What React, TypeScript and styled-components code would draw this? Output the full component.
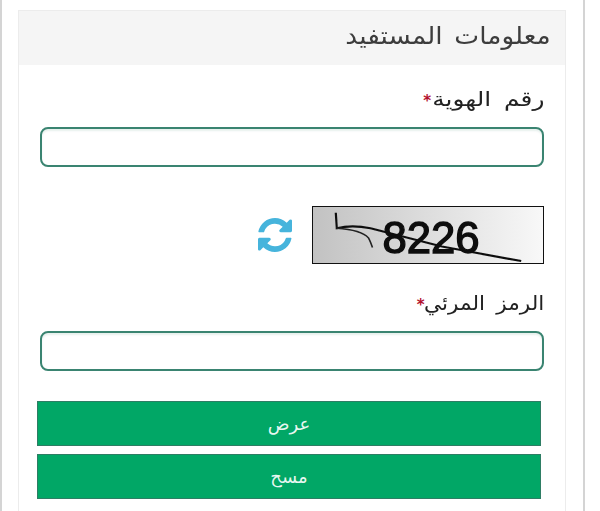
import styled, { createGlobalStyle } from "styled-components";

const GlobalStyle = createGlobalStyle`
  html, body {
    margin: 0;
    background: #fff;
    overflow: hidden;
  }
`;

function Captcha() {
  return (
    <CaptchaFrame viewBox="0 0 232 58" preserveAspectRatio="none" aria-label="captcha">
      <defs>
        <linearGradient id="captchaBg" x1="0" x2="1" y1="0" y2="0">
          <stop offset="0" stopColor="#c2c2c2" />
          <stop offset="0.55" stopColor="#e0e0e0" />
          <stop offset="1" stopColor="#f8f8f8" />
        </linearGradient>
        <filter id="captchaBlur">
          <feGaussianBlur stdDeviation="0.7" />
        </filter>
      </defs>
      <rect width="232" height="58" fill="url(#captchaBg)" />
      <g filter="url(#captchaBlur)">
        <text
          x="70"
          y="48"
          fontFamily="'Liberation Sans', sans-serif"
          fontSize="46"
          fill="#111"
          stroke="#111"
          strokeWidth="1.4"
          textLength="98"
          lengthAdjust="spacingAndGlyphs"
        >
          8226
        </text>
        <path d="M23 6 L24 22 C36 19 48 20 58 22 L130 41 L210 56" stroke="#111" strokeWidth="2.2" fill="none" />
        <path d="M24 22 C38 23 50 25 56 32 C58 36 59 39 60 42" stroke="#222" strokeWidth="1.6" fill="none" />
      </g>
    </CaptchaFrame>
  );
}

function RefreshGlyph() {
  return (
    <RefreshSvg viewBox="128 128 1536 1536" aria-hidden="true">
      <path
        fill="currentColor"
        d="M1639 1056q0 5-1 7-64 268-268 434.5t-478 166.5q-146 0-282.5-55t-243.500-157l-129 129q-19 19-45 19t-45-19-19-45v-448q0-26 19-45t45-19h448q26 0 45 19t19 45-19 45l-137 137q71 66 161 102t187 36q134 0 250-65t186-179q11-17 53-117 8-23 30-23h192q13 0 22.500 9.500t9.500 22.500zm25-800v448q0 26-19 45t-45 19h-448q-26 0-45-19t-19-45 19-45l138-138q-148-137-349-137-134 0-250 65t-186 179q-11 17-53 117-8 23-30 23h-199q-13 0-22.500-9.500t-9.500-22.500v-7q65-268 270-434.500t480-166.500q146 0 284 55.500t245 156.500l130-129q19-19 45-19t45 19 19 45z"
      />
    </RefreshSvg>
  );
}

function App() {
  return (
    <Page dir="rtl">
      <GlobalStyle />
      <Panel>
        <PanelHeading>
          <Stretched $x={1.1}>معلومات المستفيد</Stretched>
        </PanelHeading>
        <PanelBody>
          <Field>
            <Label>
              <Stretched $x={1.24}>رقم الهوية</Stretched>
              <Required>*</Required>
            </Label>
            <TextInput type="text" />
          </Field>
          <CaptchaRow>
            <Captcha />
            <RefreshGlyph />
          </CaptchaRow>
          <Field>
            <Label>
              <Stretched $x={1.08}>الرمز المرئي</Stretched>
              <Required>*</Required>
            </Label>
            <TextInput type="text" />
          </Field>
          <Actions>
            <ActionButton type="button">عرض</ActionButton>
            <ActionButton type="button">مسح</ActionButton>
          </Actions>
        </PanelBody>
      </Panel>
    </Page>
  );
}

const Page = styled.div`
  box-sizing: border-box;
  width: 585px;
  height: 511px;
  padding: 10px 17px 0 16px;
  border-left: 2px solid #d4d4d4;
  border-right: 2px solid #d4d4d4;
  font-family: "DejaVu Sans", "Noto Sans", sans-serif;
  overflow: hidden;
`;

const Panel = styled.section`
  height: 520px;
  border: 1px solid #ececec;
  background: #fff;
`;

const PanelHeading = styled.h3`
  box-sizing: border-box;
  height: 54px;
  margin: 0;
  padding: 0 14px 0 0;
  background: #f5f5f5;
  color: #3d3d3d;
  font-size: 24px;
  font-weight: 400;
  line-height: 50px;
  word-spacing: 3px;
`;

// the Arabic face in the reference runs wider than DejaVu, letter-spacing has no effect on joined script
const Stretched = styled.span<{ $x: number }>`
  display: inline-block;
  transform: scaleX(${({ $x }) => $x});
  transform-origin: right center;
  margin-left: ${({ $x }) => `${($x - 1) * 90}px`};
`;

const PanelBody = styled.div`
  display: flex;
  flex-direction: column;
  padding: 19px 21px 0 21px;
`;

const Field = styled.div`
  display: flex;
  flex-direction: column;
`;

const Label = styled.label`
  color: #222;
  font-size: 20px;
  line-height: 30px;
  margin-bottom: 11px;
  word-spacing: 4px;
`;

const Required = styled.span`
  color: #b3112e;
  font-size: 15px;
  font-weight: 700;
  margin-right: 1px;
`;

const TextInput = styled.input`
  box-sizing: border-box;
  width: 504px;
  height: 40px;
  padding: 0 10px;
  border: 2px solid #3a8471;
  border-radius: 8px;
  background: #fff;
  box-shadow: inset 0 2px 2px rgba(20, 110, 80, 0.1);
  outline: none;
`;

const CaptchaRow = styled.div`
  display: flex;
  align-items: center;
  gap: 20px;
  margin: 39px 0 24px;
`;

const CaptchaFrame = styled.svg`
  display: block;
  box-sizing: border-box;
  width: 232px;
  height: 58px;
  border: 1px solid #111;
  direction: ltr;
`;

const RefreshSvg = styled.svg`
  display: block;
  width: 34px;
  height: 34px;
  color: #46b4dc;
`;

const Actions = styled.div`
  display: flex;
  flex-direction: column;
  gap: 8px;
  width: 504px;
  margin: 30px 3px 0 0;
`;

const ActionButton = styled.button`
  box-sizing: border-box;
  height: 45px;
  padding: 0;
  border: 1px solid #2e7d64;
  background: #01a766;
  color: rgba(255, 255, 255, 0.92);
  font-family: inherit;
  font-size: 18px;
`;

export default App;
